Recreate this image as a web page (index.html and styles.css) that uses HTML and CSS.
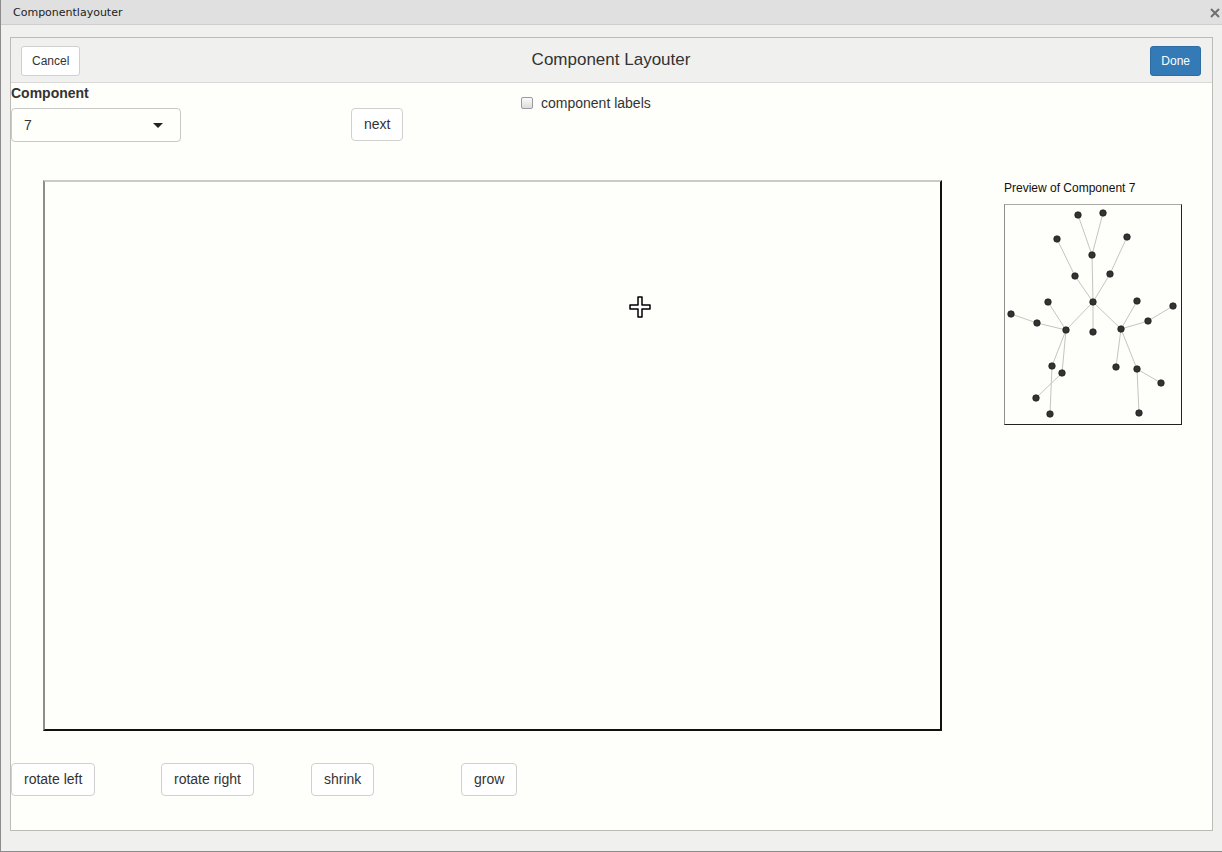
FILE: index.html
```
<!DOCTYPE html>
<html lang="en">
<head>
  <meta charset="UTF-8" />
  <title>Componentlayouter</title>
  <link rel="stylesheet" href="styles.css">
</head>
<body>
  <div class="frame">
    <!-- window title -->
    <div class="titlebar">
      <span class="titlebar-text">Componentlayouter</span>
      <svg class="close-x" width="10" height="10" viewBox="0 0 10 10">
        <path d="M1 1 L9 9 M9 1 L1 9" stroke="#707070" stroke-width="2" />
      </svg>
    </div>

    <div class="window">
      <div class="panel">
        <div class="panel-header">
          <div class="left"><button class="btn btn-sm">Cancel</button></div>
          <h4 class="panel-title">Component Layouter</h4>
          <div class="right"><button class="btn btn-sm btn-primary">Done</button></div>
        </div>

        <div class="panel-body">
          <!-- top controls -->
          <div class="controls">
            <div class="col-component">
              <label class="control-label">Component</label>
              <div class="select-box">
                <span class="select-value">7</span>
                <span class="caret"></span>
              </div>
            </div>
            <div class="col-next">
              <button class="btn">next</button>
            </div>
            <div class="col-check">
              <label class="checkbox"><input type="checkbox"> <span>component labels</span></label>
            </div>
          </div>

          <!-- layout area + preview -->
          <div class="stage">
            <div class="canvas">
              <svg class="cursor" width="22" height="22" viewBox="0 0 22 22">
                <path d="M9 1 H13 V9 H21 V13 H13 V21 H9 V13 H1 V9 H9 Z" fill="#fff" stroke="#000" stroke-width="1.5" stroke-linejoin="round" />
              </svg>
            </div>
            <div class="preview">
              <div class="preview-title">Preview of Component 7</div>
              <div class="preview-box">
                <svg width="176" height="219" viewBox="1005 205 176 219">
                  <g stroke="#c4c4c0" stroke-width="1">
                    <line x1="1078" y1="215" x2="1092" y2="255" />
                    <line x1="1103" y1="213" x2="1092" y2="255" />
                    <line x1="1092" y1="255" x2="1093" y2="302" />
                    <line x1="1057" y1="239" x2="1075" y2="276" />
                    <line x1="1075" y1="276" x2="1093" y2="302" />
                    <line x1="1127" y1="237" x2="1110" y2="274" />
                    <line x1="1110" y1="274" x2="1093" y2="302" />
                    <line x1="1093" y1="302" x2="1093" y2="332" />
                    <line x1="1093" y1="302" x2="1066" y2="330" />
                    <line x1="1093" y1="302" x2="1121" y2="329" />
                    <line x1="1048" y1="302" x2="1066" y2="330" />
                    <line x1="1011" y1="314" x2="1037" y2="323" />
                    <line x1="1037" y1="323" x2="1066" y2="330" />
                    <line x1="1066" y1="330" x2="1052" y2="366" />
                    <line x1="1066" y1="330" x2="1062" y2="373" />
                    <line x1="1052" y1="366" x2="1050" y2="414" />
                    <line x1="1062" y1="373" x2="1036" y2="398" />
                    <line x1="1137" y1="301" x2="1121" y2="329" />
                    <line x1="1173" y1="306" x2="1148" y2="321" />
                    <line x1="1148" y1="321" x2="1121" y2="329" />
                    <line x1="1121" y1="329" x2="1116" y2="367" />
                    <line x1="1121" y1="329" x2="1137" y2="369" />
                    <line x1="1137" y1="369" x2="1161" y2="383" />
                    <line x1="1137" y1="369" x2="1139" y2="413" />
                  </g>
                  <g fill="#333" stroke="#111" stroke-width="0.6">
                    <circle cx="1078" cy="215" r="3.3" />
                    <circle cx="1103" cy="213" r="3.3" />
                    <circle cx="1057" cy="239" r="3.3" />
                    <circle cx="1127" cy="237" r="3.3" />
                    <circle cx="1092" cy="255" r="3.3" />
                    <circle cx="1075" cy="276" r="3.3" />
                    <circle cx="1110" cy="274" r="3.3" />
                    <circle cx="1093" cy="302" r="3.3" />
                    <circle cx="1048" cy="302" r="3.3" />
                    <circle cx="1137" cy="301" r="3.3" />
                    <circle cx="1173" cy="306" r="3.3" />
                    <circle cx="1011" cy="314" r="3.3" />
                    <circle cx="1037" cy="323" r="3.3" />
                    <circle cx="1066" cy="330" r="3.3" />
                    <circle cx="1093" cy="332" r="3.3" />
                    <circle cx="1121" cy="329" r="3.3" />
                    <circle cx="1148" cy="321" r="3.3" />
                    <circle cx="1052" cy="366" r="3.3" />
                    <circle cx="1062" cy="373" r="3.3" />
                    <circle cx="1116" cy="367" r="3.3" />
                    <circle cx="1137" cy="369" r="3.3" />
                    <circle cx="1161" cy="383" r="3.3" />
                    <circle cx="1036" cy="398" r="3.3" />
                    <circle cx="1050" cy="414" r="3.3" />
                    <circle cx="1139" cy="413" r="3.3" />
                  </g>
                </svg>
              </div>
            </div>
          </div>

          <!-- transform buttons -->
          <div class="actions">
            <div><button class="btn">rotate left</button></div>
            <div><button class="btn">rotate right</button></div>
            <div><button class="btn">shrink</button></div>
            <div><button class="btn">grow</button></div>
          </div>
        </div>
      </div>
    </div>
  </div>
</body>
</html>
```

FILE: styles.css
```
* {
  margin: 0;
  padding: 0;
  box-sizing: border-box;
}
body {
  font-family: 'Liberation Sans', Arial, sans-serif;
  font-size: 14px;
  color: #333;
  background-color: #f0f1ef;
}
.frame {
  height: 852px;
  border-left: 1px solid #8c8c8c;
  border-bottom: 1px solid #8c8c8c;
  display: flex;
  flex-direction: column;
}
.titlebar {
  height: 25px;
  background-color: #dfe0df;
  border-bottom: 1px solid #cdcecd;
  display: flex;
  align-items: center;
  justify-content: space-between;
  padding: 0 2px 0 12px;
}
.titlebar-text {
  font-family: 'DejaVu Sans', sans-serif;
  font-size: 11px;
  color: #222;
}
.close-x {
  margin-top: 1px;
}
.window {
  flex: 1;
  padding: 12px 9px 0 9px;
}
.panel {
  border: 1px solid #bbbbb9;
  background-color: #fefefa;
}
.panel-header {
  height: 45px;
  background-color: #f0f1ef;
  border-bottom: 1px solid #d9dad8;
  display: grid;
  grid-template-columns: 1fr auto 1fr;
  align-items: center;
  padding: 1px 11px 0 10px;
}
.panel-header .right {
  text-align: right;
}
.panel-title {
  font-size: 17px;
  font-weight: normal;
  color: #333;
  margin-top: -1px;
}
.btn {
  font-family: 'Liberation Sans', Arial, sans-serif;
  font-size: 14px;
  line-height: 20px;
  color: #333;
  background-color: #fff;
  border: 1px solid #d0d0ce;
  border-radius: 4px;
  padding: 6px 12px;
  cursor: pointer;
}
.btn-sm {
  font-size: 12px;
  line-height: 18px;
  padding: 5px 10px;
  border-radius: 3px;
}
.btn-primary {
  color: #fff;
  background-color: #337ab7;
  border-color: #2e6da4;
}
.panel-body {
  padding: 0 0 34px 0;
}
.controls {
  display: flex;
  align-items: flex-start;
}
.col-component {
  width: 340px;
}
.control-label {
  display: block;
  font-weight: bold;
  line-height: 20px;
  margin-bottom: 5px;
}
.select-box {
  width: 170px;
  height: 34px;
  border: 1px solid #c8c8c6;
  border-radius: 4px;
  background-color: #fefefa;
  display: flex;
  align-items: center;
  justify-content: space-between;
  padding: 0 17px 0 12px;
}
.caret {
  width: 0;
  height: 0;
  border-top: 5px solid #222;
  border-left: 5px solid transparent;
  border-right: 5px solid transparent;
}
.col-next {
  width: 170px;
  padding-top: 25px;
}
.col-next .btn {
  padding: 5px 12px 6px;
  width: 52px;
}
.col-check {
  padding-top: 10px;
}
.checkbox {
  display: flex;
  align-items: center;
  line-height: 20px;
}
.checkbox input {
  appearance: none;
  width: 12px;
  height: 12px;
  border: 1px solid #9a9a9a;
  border-radius: 2px;
  background: linear-gradient(#fafafa, #dcdcdc);
  margin-right: 8px;
}
.stage {
  display: flex;
  align-items: flex-start;
  margin-top: 38px;
}
.canvas {
  position: relative;
  width: 899px;
  height: 551px;
  margin-left: 32px;
  background-color: #fefefa;
  border-style: solid;
  border-width: 2px;
  border-color: #cacac6 #111 #111 #8e8e8c;
}
.cursor {
  position: absolute;
  left: 584px;
  top: 114px;
}
.preview {
  margin-left: 62px;
  margin-top: 1px;
}
.preview-title {
  font-size: 12px;
  line-height: 14px;
  color: #111;
  margin-bottom: 9px;
}
.preview-box {
  width: 178px;
  height: 221px;
  border-style: solid;
  border-width: 1px;
  border-color: #a8a8a6 #222 #222 #8e8e8c;
  background-color: #fefefa;
}
.preview-box svg {
  display: block;
}
.actions {
  display: grid;
  grid-template-columns: repeat(4, 150px);
  margin-top: 32px;
}
.actions .btn {
  padding: 5px 12px 6px;
}
```
